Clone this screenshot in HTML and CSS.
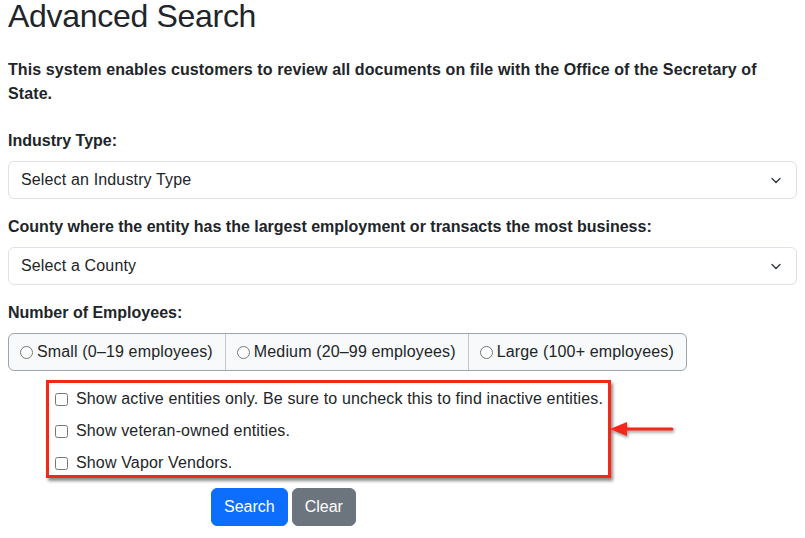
FILE: index.html
```html
<!DOCTYPE html>
<html lang="en">
<head>
    <meta charset="UTF-8">
    <meta name="viewport" content="width=device-width, initial-scale=1.0">
    <title>Advanced Search</title>
    <link rel="stylesheet" href="styles.css">
</head>
<body>
    <div class="page">
        <h1 class="title">Advanced Search</h1>
        <p class="intro">This system enables customers to review all documents on file with the Office of the Secretary of State.</p>

        <div class="field">
            <label class="field-label" for="industry">Industry Type:</label>
            <select class="form-select" id="industry">
                <option>Select an Industry Type</option>
            </select>
        </div>

        <div class="field">
            <label class="field-label" for="county">County where the entity has the largest employment or transacts the most business:</label>
            <select class="form-select" id="county">
                <option>Select a County</option>
            </select>
        </div>

        <div class="field field-last">
            <span class="field-label">Number of Employees:</span>
            <div class="btn-group">
                <label class="size-option"><input type="radio" name="size"> Small (0–19 employees)</label>
                <label class="size-option"><input type="radio" name="size"> Medium (20–99 employees)</label>
                <label class="size-option"><input type="radio" name="size"> Large (100+ employees)</label>
            </div>
        </div>

        <div class="filters">
            <label class="form-check"><input type="checkbox"> Show active entities only. Be sure to uncheck this to find inactive entities.</label>
            <label class="form-check"><input type="checkbox"> Show veteran-owned entities.</label>
            <label class="form-check"><input type="checkbox"> Show Vapor Vendors.</label>

            <!-- callout arrow -->
            <svg class="callout-arrow" width="66" height="20" viewBox="0 0 66 20">
                <line x1="14" y1="10" x2="62" y2="10" stroke="#f5261a" stroke-width="3" stroke-linecap="round"/>
                <polygon points="0,10 17,3 17,17" fill="#f5261a"/>
            </svg>
        </div>

        <div class="actions">
            <button class="btn btn-primary" type="button">Search</button>
            <button class="btn btn-secondary" type="button">Clear</button>
        </div>
    </div>
</body>
</html>
```

FILE: styles.css
```css
* {
    box-sizing: border-box;
}

body {
    margin: 0;
    font-family: "Liberation Sans", Arial, sans-serif;
    font-size: 16px;
    line-height: 1.5;
    letter-spacing: 0.15px;
    color: #212529;
    background: #fff;
}

.page {
    padding: 0 8px;
}

.title {
    font-size: 32px;
    font-weight: 500;
    line-height: 32px;
    letter-spacing: -0.3px;
    margin: 0 0 26px;
}

.intro {
    font-weight: bold;
    letter-spacing: 0.1px;
    margin: 0 0 23px;
}

.field {
    margin-bottom: 16px;
}

.field-last {
    margin-bottom: 9px;
}

.field-label {
    display: block;
    font-weight: bold;
    letter-spacing: 0;
    margin-bottom: 8px;
}

.form-select {
    display: block;
    width: 100%;
    height: 38px;
    padding: 6px 36px 6px 12px;
    font-family: inherit;
    font-size: 16px;
    line-height: 1.5;
    letter-spacing: inherit;
    color: #212529;
    background-color: #fff;
    background-image: url("data:image/svg+xml,%3csvg xmlns='http://www.w3.org/2000/svg' viewBox='0 0 16 16'%3e%3cpath fill='none' stroke='%23343a40' stroke-linecap='round' stroke-linejoin='round' stroke-width='1.4' d='m4 6.5 4 4 4-4'/%3e%3c/svg%3e");
    background-repeat: no-repeat;
    background-position: right 12px center;
    background-size: 16px 16px;
    border: 1px solid #dee2e6;
    border-radius: 6px;
    appearance: none;
}

.btn-group {
    display: inline-flex;
    border: 1px solid #9ea4aa;
    border-radius: 6px;
    background: #f8f9fa;
    overflow: hidden;
}

.size-option {
    display: flex;
    align-items: center;
    padding: 6px 12px 6px 11px;
    line-height: 24px;
    white-space: nowrap;
}

.size-option + .size-option {
    border-left: 1px solid #c3c7cb;
}

.size-option input {
    width: 13px;
    height: 13px;
    margin: 0 4px 0 0;
}

.filters {
    position: relative;
    width: fit-content;
    margin-left: 38px;
    padding: 4px 5px 0 6px;
    border: 3px solid #f5261a;
    box-shadow: 2px 3px 3px rgba(0, 0, 0, 0.45);
    display: flex;
    flex-direction: column;
    gap: 8px;
}

.form-check {
    display: flex;
    align-items: center;
    line-height: 24px;
    white-space: nowrap;
}

.form-check input {
    width: 13px;
    height: 13px;
    margin: 0 8px 0 0;
}

.callout-arrow {
    position: absolute;
    left: calc(100% + 2px);
    top: 50%;
    transform: translateY(-50%);
    filter: drop-shadow(1px 2px 1.5px rgba(0, 0, 0, 0.4));
}

.actions {
    margin: 10px 0 0 203px;
    display: flex;
    gap: 4px;
}

.btn {
    font-family: inherit;
    font-size: 16px;
    line-height: 1.5;
    letter-spacing: 0;
    padding: 6px 12px;
    border: 1px solid transparent;
    border-radius: 6px;
    color: #fff;
}

.btn-primary {
    background: #0d6efd;
    border-color: #0d6efd;
}

.btn-secondary {
    background: #6c757d;
    border-color: #6c757d;
}
```
